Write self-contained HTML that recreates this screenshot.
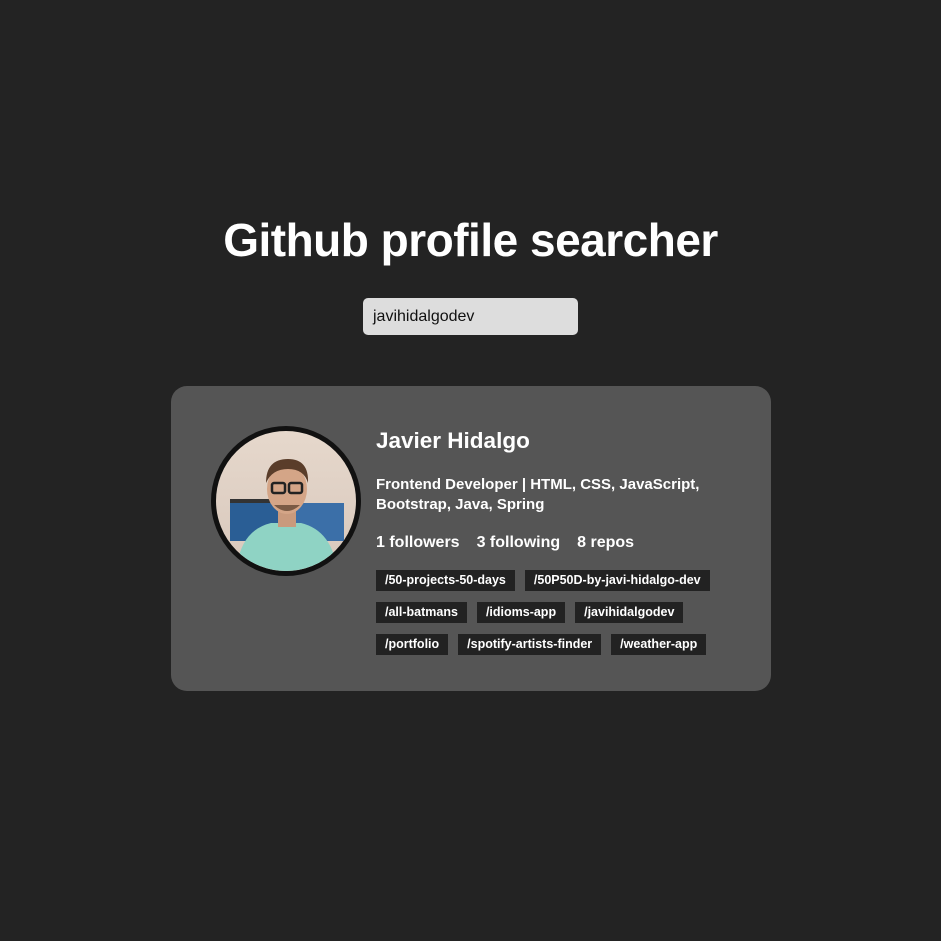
<!DOCTYPE html>
<html><head><style>
body{margin:0;background:#232323;width:941px;height:941px;font-family:"Liberation Sans",Arial,sans-serif;color:#fff;position:relative;overflow:hidden}
h1{position:absolute;top:212px;left:0;width:941px;text-align:center;margin:0;font-size:46px;font-weight:bold;line-height:56px;letter-spacing:-0.5px}
.inp{position:absolute;left:363px;top:298px;width:215px;height:37px;background:#dddddd;border-radius:5px;color:#111;font-size:16px;line-height:37px;box-sizing:border-box;padding-left:10px}
.card{position:absolute;left:171px;top:386px;width:600px;height:305px;background:#555;border-radius:16px}
.av{position:absolute;left:40px;top:40px;width:140px;height:140px;border:5px solid #111;border-radius:50%;overflow:hidden;background:linear-gradient(#e6d8cc,#d8c8bc)}
.name{position:absolute;left:205px;top:42px;font-size:22.5px;font-weight:bold}
.bio{position:absolute;left:205px;top:89px;font-size:15px;font-weight:bold;line-height:20px;width:340px}
.stats{position:absolute;left:205px;top:148px;font-size:16px;font-weight:bold}
.stats span{margin-right:17px}
.repos{position:absolute;left:205px;top:184px;width:370px}
.repos span{display:inline-block;background:#222;font-size:12.5px;font-weight:bold;padding:0 9px;height:21px;line-height:21px;margin:0 10px 11px 0}
</style></head><body>
<h1>Github profile searcher</h1>
<div class="inp">javihidalgodev</div>
<div class="card">
<div class="av"><svg width="140" height="140" viewBox="0 0 140 140">
<rect x="14" y="70" width="50" height="40" fill="#2a5e95"/><rect x="78" y="72" width="50" height="38" fill="#3b6fa8"/>
<rect x="14" y="68" width="50" height="4" fill="#333"/>
<path d="M20 145 Q22 100 55 92 L85 92 Q118 100 122 145Z" fill="#8fd3c4"/>
<rect x="62" y="78" width="18" height="18" fill="#c99a7d"/>
<ellipse cx="71" cy="58" rx="20" ry="25" fill="#d4a587"/>
<path d="M50 52 Q50 28 72 28 Q93 28 92 52 Q88 38 72 38 Q56 38 50 52Z" fill="#5a3d2a"/>
<rect x="56" y="52" width="13" height="10" rx="2" fill="none" stroke="#222" stroke-width="2.5"/><rect x="73" y="52" width="13" height="10" rx="2" fill="none" stroke="#222" stroke-width="2.5"/>
<path d="M58 74 Q71 86 84 74" fill="#7a5a44"/>
</svg></div>
<div class="name">Javier Hidalgo</div>
<div class="bio">Frontend Developer | HTML, CSS, JavaScript, Bootstrap, Java, Spring</div>
<div class="stats"><span>1 followers</span><span>3 following</span><span>8 repos</span></div>
<div class="repos"><span>/50-projects-50-days</span><span>/50P50D-by-javi-hidalgo-dev</span><span>/all-batmans</span><span>/idioms-app</span><span>/javihidalgodev</span><span>/portfolio</span><span>/spotify-artists-finder</span><span>/weather-app</span></div>
</div>
</body></html>
